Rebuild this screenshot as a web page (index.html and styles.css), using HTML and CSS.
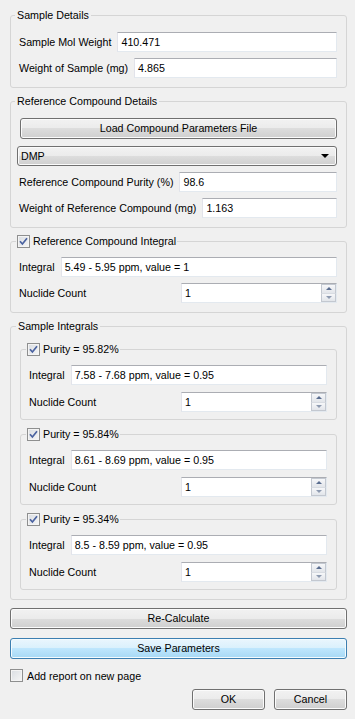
FILE: index.html
```html
<!DOCTYPE html>
<html>
<head>
<meta charset="utf-8">
<link rel="stylesheet" href="styles.css">
</head>
<body>
<div class="dialog">
  <fieldset class="group first">
    <legend>Sample Details</legend>
    <div class="row"><span class="lbl">Sample Mol Weight</span><div class="edit">410.471</div></div>
    <div class="row"><span class="lbl">Weight of Sample (mg)</span><div class="edit">4.865</div></div>
  </fieldset>

  <fieldset class="group">
    <legend>Reference Compound Details</legend>
    <div class="btn load">Load Compound Parameters File</div>
    <div class="combo"><span class="combo-text">DMP</span><span class="combo-arrow"></span></div>
    <div class="row"><span class="lbl">Reference Compound Purity (%)</span><div class="edit">98.6</div></div>
    <div class="row"><span class="lbl">Weight of Reference Compound (mg)</span><div class="edit">1.163</div></div>
  </fieldset>

  <fieldset class="group cbgroup">
    <legend class="cb-legend"><span class="cb checked"><svg viewBox="0 0 13 13" width="13" height="13"><path d="M3 6.2 L5.4 9 L10 3.3" fill="none" stroke="#4a62a0" stroke-width="1.7"/></svg></span><span>Reference Compound Integral</span></legend>
    <div class="row"><span class="lbl">Integral</span><div class="edit">5.49 - 5.95 ppm, value = 1</div></div>
    <div class="row"><span class="lbl">Nuclide Count</span><div class="spin wide"><span class="spin-val">1</span><span class="arrows"><span class="arr up"></span><span class="arr down"></span></span></div></div>
  </fieldset>

  <fieldset class="group outer">
    <legend>Sample Integrals</legend>

    <fieldset class="group inner">
      <legend class="cb-legend"><span class="cb checked"><svg viewBox="0 0 13 13" width="13" height="13"><path d="M3 6.2 L5.4 9 L10 3.3" fill="none" stroke="#4a62a0" stroke-width="1.7"/></svg></span><span>Purity = 95.82%</span></legend>
      <div class="row"><span class="lbl">Integral</span><div class="edit">7.58 - 7.68 ppm, value = 0.95</div></div>
      <div class="row spinrow"><span class="lbl">Nuclide Count</span><div class="spin narrow"><span class="spin-val">1</span><span class="arrows"><span class="arr up"></span><span class="arr down"></span></span></div></div>
    </fieldset>

    <fieldset class="group inner">
      <legend class="cb-legend"><span class="cb checked"><svg viewBox="0 0 13 13" width="13" height="13"><path d="M3 6.2 L5.4 9 L10 3.3" fill="none" stroke="#4a62a0" stroke-width="1.7"/></svg></span><span>Purity = 95.84%</span></legend>
      <div class="row"><span class="lbl">Integral</span><div class="edit">8.61 - 8.69 ppm, value = 0.95</div></div>
      <div class="row spinrow"><span class="lbl">Nuclide Count</span><div class="spin narrow"><span class="spin-val">1</span><span class="arrows"><span class="arr up"></span><span class="arr down"></span></span></div></div>
    </fieldset>

    <fieldset class="group inner">
      <legend class="cb-legend"><span class="cb checked"><svg viewBox="0 0 13 13" width="13" height="13"><path d="M3 6.2 L5.4 9 L10 3.3" fill="none" stroke="#4a62a0" stroke-width="1.7"/></svg></span><span>Purity = 95.34%</span></legend>
      <div class="row"><span class="lbl">Integral</span><div class="edit">8.5 - 8.59 ppm, value = 0.95</div></div>
      <div class="row spinrow"><span class="lbl">Nuclide Count</span><div class="spin narrow"><span class="spin-val">1</span><span class="arrows"><span class="arr up"></span><span class="arr down"></span></span></div></div>
    </fieldset>
  </fieldset>

  <div class="btn recalc">Re-Calculate</div>
  <div class="btn save">Save Parameters</div>

  <div class="check-row"><span class="cb"></span><span>Add report on new page</span></div>

  <div class="actions">
    <div class="btn action">OK</div>
    <div class="btn action">Cancel</div>
  </div>
</div>
</body>
</html>
```
FILE: styles.css
```css
* { box-sizing: border-box; }
html, body {
  margin: 0;
  background: #f0f0f0;
}
body {
  width: 355px;
  height: 719px;
  overflow: hidden;
  font-family: "Liberation Sans", Arial, sans-serif;
  font-size: 10.7px;
  color: #000;
}
.dialog {
  padding: 8px 8px 0 10px;
  display: flex;
  flex-direction: column;
}
.group {
  margin: 6px 0 0 0;
  padding: 10px 9px 9px 8px;
  border: 1px solid #d5d5d5;
  border-radius: 3px;
  min-width: 0;
}
.group.first { margin-top: 0; }
.group legend {
  padding: 0 2px;
  margin-left: -4px;
  height: 14px;
  line-height: 14px;
  display: flex;
  align-items: center;
}
.group legend.cb-legend {
  padding: 0 1px;
  margin-left: -3px;
  gap: 3px;
}
.cbgroup { padding-top: 9px; }
.outer { padding: 9px; }
.inner {
  margin-top: 7px;
  padding: 9px 9px 7px 8px;
}
.outer > legend + .inner { margin-top: 0; }

.row {
  display: flex;
  align-items: center;
  gap: 6px;
  height: 20px;
}
.row + .row { margin-top: 6px; }
.inner .row + .spinrow { margin-top: 7px; }
.lbl { white-space: nowrap; }
.edit {
  flex: 1;
  min-width: 0;
  height: 20px;
  background: #fff;
  border: 1px solid;
  border-color: #abadb3 #e3e9ef #e3e9ef #e2e3ea;
  padding: 0 3px;
  line-height: 18px;
  white-space: nowrap;
  overflow: hidden;
}
.spin {
  margin-left: auto;
  height: 20px;
  background: #fff;
  border: 1px solid;
  border-color: #abadb3 #e3e9ef #e3e9ef #e2e3ea;
  display: flex;
}
.spin.wide { width: 156px; }
.spin.narrow { width: 146px; }
.spin-val {
  flex: 1;
  padding: 0 3px;
  line-height: 18px;
}
.arrows {
  width: 15px;
  display: flex;
  flex-direction: column;
}
.arr {
  flex: 1;
  position: relative;
  border: 1px solid #c3c8d0;
  background: linear-gradient(#f6f7f9, #e2e5ea);
}
.arr.up { border-bottom-color: #d8dce2; }
.arr.down { border-top: none; }
.arr::after {
  content: "";
  position: absolute;
  left: 50%;
  top: 50%;
  margin-left: -3px;
  border-left: 3px solid transparent;
  border-right: 3px solid transparent;
}
.arr.up::after {
  margin-top: -2px;
  border-bottom: 3px solid #5a6d8f;
}
.arr.down::after {
  margin-top: -1px;
  border-top: 3px solid #8d9ab0;
}

.btn {
  height: 21px;
  border: 1px solid #707070;
  border-radius: 3px;
  background: linear-gradient(#f2f2f2 0%, #ebebeb 50%, #dddddd 50%, #cfcfcf 100%);
  box-shadow: inset 0 0 0 1px #fbfbfb;
  text-align: center;
  line-height: 19px;
  white-space: nowrap;
}
.load { margin-left: 1px; }
.combo {
  margin: 7px 0 6px -2px;
  height: 20px;
  border: 1px solid #707070;
  border-radius: 3px;
  background: linear-gradient(#f2f2f2 0%, #ebebeb 50%, #dddddd 50%, #cfcfcf 100%);
  box-shadow: inset 0 0 0 1px #fbfbfb;
  display: flex;
  align-items: center;
  padding: 0 7px 0 3px;
}
.combo + .row { margin-top: 0; }
.combo-text { flex: 1; }
.combo-arrow {
  width: 0;
  height: 0;
  border-left: 4px solid transparent;
  border-right: 4px solid transparent;
  border-top: 4px solid #000;
}
.recalc { margin-top: 8px; }
.save {
  margin-top: 9px;
  border-color: #3c7fb1;
  background: linear-gradient(#eaf6fd 0%, #d9f0fc 50%, #bee6fd 50%, #a7d9f5 100%);
  box-shadow: inset 0 0 0 1px #f4fbfe;
}

.cb {
  width: 13px;
  height: 13px;
  flex: none;
  border: 1px solid #8e8f8f;
  background: linear-gradient(135deg, #d9dde2, #f6f6f6);
  box-shadow: inset 0 0 0 1px #f4f4f4;
  display: block;
  position: relative;
}
.cb svg {
  position: absolute;
  left: -1px;
  top: -1px;
}
.check-row {
  margin-top: 10px;
  display: flex;
  align-items: center;
  gap: 4px;
  height: 13px;
}
.actions {
  margin-top: 7px;
  display: flex;
  justify-content: flex-end;
  gap: 9px;
}
.action { width: 73px; }
```
